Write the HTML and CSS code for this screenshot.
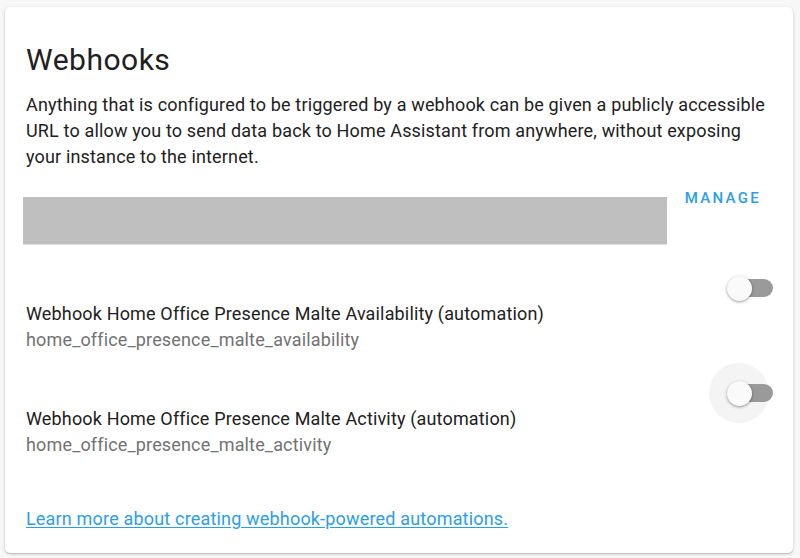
FILE: index.html
```html
<!DOCTYPE html>
<html>
<head>
<meta charset="utf-8">
<link rel="stylesheet" href="styles.css">
</head>
<body>
<div class="card">
  <h1 class="title">Webhooks</h1>
  <p class="desc">Anything that is configured to be triggered by a webhook can be given a publicly accessible URL to allow you to send data back to Home Assistant from anywhere, without exposing your instance to the internet.</p>
  <div class="manage-row">
    <div class="redacted"></div>
    <span class="manage">MANAGE</span>
  </div>
  <div class="items">
    <div class="item">
      <div class="item-text">
        <div class="primary">Webhook Home Office Presence Malte Availability (automation)</div>
        <div class="secondary">home_office_presence_malte_availability</div>
      </div>
      <div class="toggle">
        <span class="track"></span>
        <span class="knob"></span>
      </div>
    </div>
    <div class="item">
      <div class="item-text">
        <div class="primary">Webhook Home Office Presence Malte Activity (automation)</div>
        <div class="secondary">home_office_presence_malte_activity</div>
      </div>
      <div class="toggle focused">
        <span class="track"></span>
        <span class="knob"></span>
      </div>
    </div>
  </div>
  <a class="learn" href="#">Learn more about creating webhook-powered automations.</a>
</div>
</body>
</html>
```
FILE: styles.css
```css
html, body {
  margin: 0;
  padding: 0;
  background: #f7f7f7;
}
body {
  font-family: Roboto, "Noto Sans", sans-serif;
  color: #212121;
  width: 800px;
  height: 558px;
  overflow: hidden;
}
.card {
  margin: 7px 0 0 5px;
  width: 788px;
  height: 546px;
  box-sizing: border-box;
  background: #ffffff;
  border-radius: 5px;
  box-shadow: 0 1px 2px rgba(0,0,0,0.22), 0 1px 4px rgba(0,0,0,0.08);
  padding: 33px 20px 0 21px;
}
.title {
  margin: 0;
  font-size: 30px;
  line-height: 40px;
  font-weight: 400;
  letter-spacing: 0.5px;
  color: #212121;
}
.desc {
  margin: 12px 0 0;
  font-size: 18px;
  line-height: 26px;
  letter-spacing: 0.16px;
}
.manage-row {
  display: flex;
  align-items: flex-start;
  justify-content: space-between;
  margin-top: 18px;
  margin-left: -3px;
}
.redacted {
  margin-top: 9px;
  width: 644px;
  height: 48px;
  background: #bfbfbf;
  border-bottom: 1px solid #e0e0e0;
  box-sizing: border-box;
}
.manage {
  font-size: 15px;
  line-height: 20px;
  font-weight: 500;
  letter-spacing: 2.3px;
  color: #2c9ee8;
  margin-right: 12px;
}
.items {
  margin-top: 3px;
}
.item {
  display: flex;
  align-items: flex-start;
  padding-top: 10px;
}
.item-text {
  flex: 1;
  margin-top: 43px;
  font-size: 18px;
  line-height: 26px;
  letter-spacing: 0.16px;
}
.primary {
  color: #212121;
}
.secondary {
  color: #727272;
}
.toggle {
  position: relative;
  width: 60px;
  height: 60px;
  margin-right: 4px;
  border-radius: 50%;
}
.toggle.focused {
  background: #f4f4f4;
}
.track {
  position: absolute;
  left: 19px;
  top: 21px;
  width: 45px;
  height: 18px;
  border-radius: 9px;
  background: #9a9a9a;
}
.knob {
  position: absolute;
  left: 17.5px;
  top: 17.5px;
  width: 25px;
  height: 25px;
  border-radius: 50%;
  background: #fafafa;
  box-shadow: 0 1px 3px rgba(0,0,0,0.4);
}
.learn {
  display: inline-block;
  margin-top: 48px;
  font-size: 18px;
  line-height: 26px;
  letter-spacing: 0.18px;
  color: #2c9ee8;
  text-decoration: underline;
  text-underline-offset: 2px;
}
```
